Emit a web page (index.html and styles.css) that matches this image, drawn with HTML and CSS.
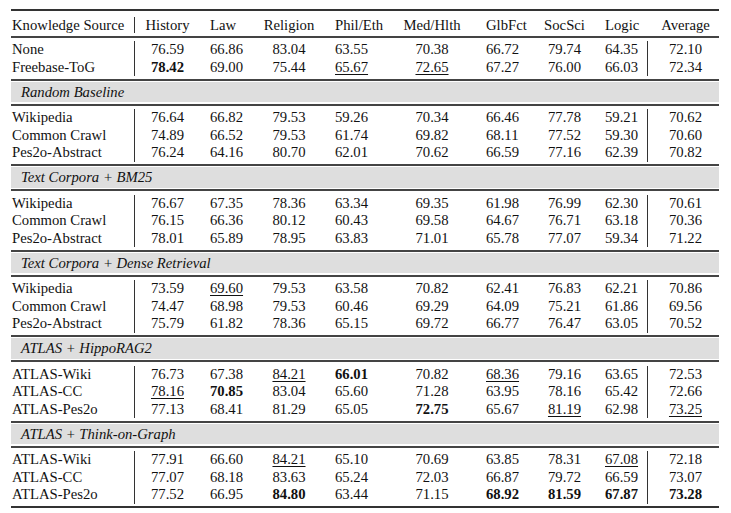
FILE: index.html
```html
<!DOCTYPE html>
<html>
<head>
<meta charset="utf-8">
<link rel="stylesheet" href="styles.css">
</head>
<body>
<div class="table">
  <div class="row head">
    <div class="c src">Knowledge Source</div>
    <div class="c hist">History</div>
    <div class="c law">Law</div>
    <div class="c rel">Religion</div>
    <div class="c phil">Phil/Eth</div>
    <div class="c med">Med/Hlth</div>
    <div class="c glb">GlbFct</div>
    <div class="c soc">SocSci</div>
    <div class="c logic">Logic</div>
    <div class="c avg">Average</div>
  </div>

  <div class="group first">
    <div class="row"><div class="c src">None</div><div class="c hist">76.59</div><div class="c law">66.86</div><div class="c rel">83.04</div><div class="c phil">63.55</div><div class="c med">70.38</div><div class="c glb">66.72</div><div class="c soc">79.74</div><div class="c logic">64.35</div><div class="c avg">72.10</div></div>
    <div class="row"><div class="c src">Freebase-ToG</div><div class="c hist"><b>78.42</b></div><div class="c law">69.00</div><div class="c rel">75.44</div><div class="c phil"><u>65.67</u></div><div class="c med"><u>72.65</u></div><div class="c glb">67.27</div><div class="c soc">76.00</div><div class="c logic">66.03</div><div class="c avg">72.34</div></div>
  </div>

  <div class="band"><div class="band-in">Random Baseline</div></div>
  <div class="group">
    <div class="row"><div class="c src">Wikipedia</div><div class="c hist">76.64</div><div class="c law">66.82</div><div class="c rel">79.53</div><div class="c phil">59.26</div><div class="c med">70.34</div><div class="c glb">66.46</div><div class="c soc">77.78</div><div class="c logic">59.21</div><div class="c avg">70.62</div></div>
    <div class="row"><div class="c src">Common Crawl</div><div class="c hist">74.89</div><div class="c law">66.52</div><div class="c rel">79.53</div><div class="c phil">61.74</div><div class="c med">69.82</div><div class="c glb">68.11</div><div class="c soc">77.52</div><div class="c logic">59.30</div><div class="c avg">70.60</div></div>
    <div class="row"><div class="c src">Pes2o-Abstract</div><div class="c hist">76.24</div><div class="c law">64.16</div><div class="c rel">80.70</div><div class="c phil">62.01</div><div class="c med">70.62</div><div class="c glb">66.59</div><div class="c soc">77.16</div><div class="c logic">62.39</div><div class="c avg">70.82</div></div>
  </div>

  <div class="band"><div class="band-in">Text Corpora + BM25</div></div>
  <div class="group">
    <div class="row"><div class="c src">Wikipedia</div><div class="c hist">76.67</div><div class="c law">67.35</div><div class="c rel">78.36</div><div class="c phil">63.34</div><div class="c med">69.35</div><div class="c glb">61.98</div><div class="c soc">76.99</div><div class="c logic">62.30</div><div class="c avg">70.61</div></div>
    <div class="row"><div class="c src">Common Crawl</div><div class="c hist">76.15</div><div class="c law">66.36</div><div class="c rel">80.12</div><div class="c phil">60.43</div><div class="c med">69.58</div><div class="c glb">64.67</div><div class="c soc">76.71</div><div class="c logic">63.18</div><div class="c avg">70.36</div></div>
    <div class="row"><div class="c src">Pes2o-Abstract</div><div class="c hist">78.01</div><div class="c law">65.89</div><div class="c rel">78.95</div><div class="c phil">63.83</div><div class="c med">71.01</div><div class="c glb">65.78</div><div class="c soc">77.07</div><div class="c logic">59.34</div><div class="c avg">71.22</div></div>
  </div>

  <div class="band"><div class="band-in">Text Corpora + Dense Retrieval</div></div>
  <div class="group">
    <div class="row"><div class="c src">Wikipedia</div><div class="c hist">73.59</div><div class="c law"><u>69.60</u></div><div class="c rel">79.53</div><div class="c phil">63.58</div><div class="c med">70.82</div><div class="c glb">62.41</div><div class="c soc">76.83</div><div class="c logic">62.21</div><div class="c avg">70.86</div></div>
    <div class="row"><div class="c src">Common Crawl</div><div class="c hist">74.47</div><div class="c law">68.98</div><div class="c rel">79.53</div><div class="c phil">60.46</div><div class="c med">69.29</div><div class="c glb">64.09</div><div class="c soc">75.21</div><div class="c logic">61.86</div><div class="c avg">69.56</div></div>
    <div class="row"><div class="c src">Pes2o-Abstract</div><div class="c hist">75.79</div><div class="c law">61.82</div><div class="c rel">78.36</div><div class="c phil">65.15</div><div class="c med">69.72</div><div class="c glb">66.77</div><div class="c soc">76.47</div><div class="c logic">63.05</div><div class="c avg">70.52</div></div>
  </div>

  <div class="band"><div class="band-in">ATLAS + HippoRAG2</div></div>
  <div class="group">
    <div class="row"><div class="c src">ATLAS-Wiki</div><div class="c hist">76.73</div><div class="c law">67.38</div><div class="c rel"><u>84.21</u></div><div class="c phil"><b>66.01</b></div><div class="c med">70.82</div><div class="c glb"><u>68.36</u></div><div class="c soc">79.16</div><div class="c logic">63.65</div><div class="c avg">72.53</div></div>
    <div class="row"><div class="c src">ATLAS-CC</div><div class="c hist"><u>78.16</u></div><div class="c law"><b>70.85</b></div><div class="c rel">83.04</div><div class="c phil">65.60</div><div class="c med">71.28</div><div class="c glb">63.95</div><div class="c soc">78.16</div><div class="c logic">65.42</div><div class="c avg">72.66</div></div>
    <div class="row"><div class="c src">ATLAS-Pes2o</div><div class="c hist">77.13</div><div class="c law">68.41</div><div class="c rel">81.29</div><div class="c phil">65.05</div><div class="c med"><b>72.75</b></div><div class="c glb">65.67</div><div class="c soc"><u>81.19</u></div><div class="c logic">62.98</div><div class="c avg"><u>73.25</u></div></div>
  </div>

  <div class="band"><div class="band-in">ATLAS + Think-on-Graph</div></div>
  <div class="group last">
    <div class="row"><div class="c src">ATLAS-Wiki</div><div class="c hist">77.91</div><div class="c law">66.60</div><div class="c rel"><u>84.21</u></div><div class="c phil">65.10</div><div class="c med">70.69</div><div class="c glb">63.85</div><div class="c soc">78.31</div><div class="c logic"><u>67.08</u></div><div class="c avg">72.18</div></div>
    <div class="row"><div class="c src">ATLAS-CC</div><div class="c hist">77.07</div><div class="c law">68.18</div><div class="c rel">83.63</div><div class="c phil">65.24</div><div class="c med">72.03</div><div class="c glb">66.87</div><div class="c soc">79.72</div><div class="c logic">66.59</div><div class="c avg">73.07</div></div>
    <div class="row"><div class="c src">ATLAS-Pes2o</div><div class="c hist">77.52</div><div class="c law">66.95</div><div class="c rel"><b>84.80</b></div><div class="c phil">63.44</div><div class="c med">71.15</div><div class="c glb"><b>68.92</b></div><div class="c soc"><b>81.59</b></div><div class="c logic"><b>67.87</b></div><div class="c avg"><b>73.28</b></div></div>
  </div>
</div>
</body>
</html>
```

FILE: styles.css
```css
html, body {
  margin: 0;
  padding: 0;
  background: #ffffff;
}

body {
  font-family: "Liberation Serif", "Times New Roman", Times, "Nimbus Roman", "DejaVu Serif", serif;
  font-size: 14.7px;
  color: #111;
}

.table {
  width: 708px;
  margin: 9px 0 0 11px;
  font-family: "Liberation Serif", "Times New Roman", Times, "Nimbus Roman", "DejaVu Serif", serif;
}

.row {
  display: grid;
  grid-template-columns: 124px 65px 52px 74px 69px 74px 71px 49px 59px 71px;
  line-height: 17.5px;
  white-space: nowrap;
}

.c {
  text-align: center;
}

.src {
  text-align: left;
  padding-left: 1px;
  border-right: 1px solid #333;
}

.law { text-align: left; padding-left: 10px; }
.phil { text-align: left; padding-left: 9px; }
.glb { text-align: left; padding-left: 17px; }
.logic { text-align: left; padding-left: 16px; }
.avg { padding-left: 4px; }

.group .logic {
  border-right: 1px solid #333;
}

.head {
  border-top: 2px solid #333;
  border-bottom: 2px solid #444;
  padding: 6px 0 1.5px;
}

.head .src {
  height: 16px;
}

.group {
  padding: 3.5px 0 2.5px;
}

.group.first {
  padding-top: 3px;
}

.group.last {
  border-bottom: 2px solid #333;
}

.band {
  border-top: 2px solid #444;
  border-bottom: 2px solid #444;
  padding: 1px 0 1.5px;
}

.band-in {
  background: #dedede;
  height: 20.5px;
  line-height: 20.5px;
  padding-left: 10px;
  font-style: italic;
}

b {
  font-weight: bold;
}

u {
  text-decoration: underline;
  text-decoration-thickness: 1px;
  text-underline-offset: 2px;
}
```
